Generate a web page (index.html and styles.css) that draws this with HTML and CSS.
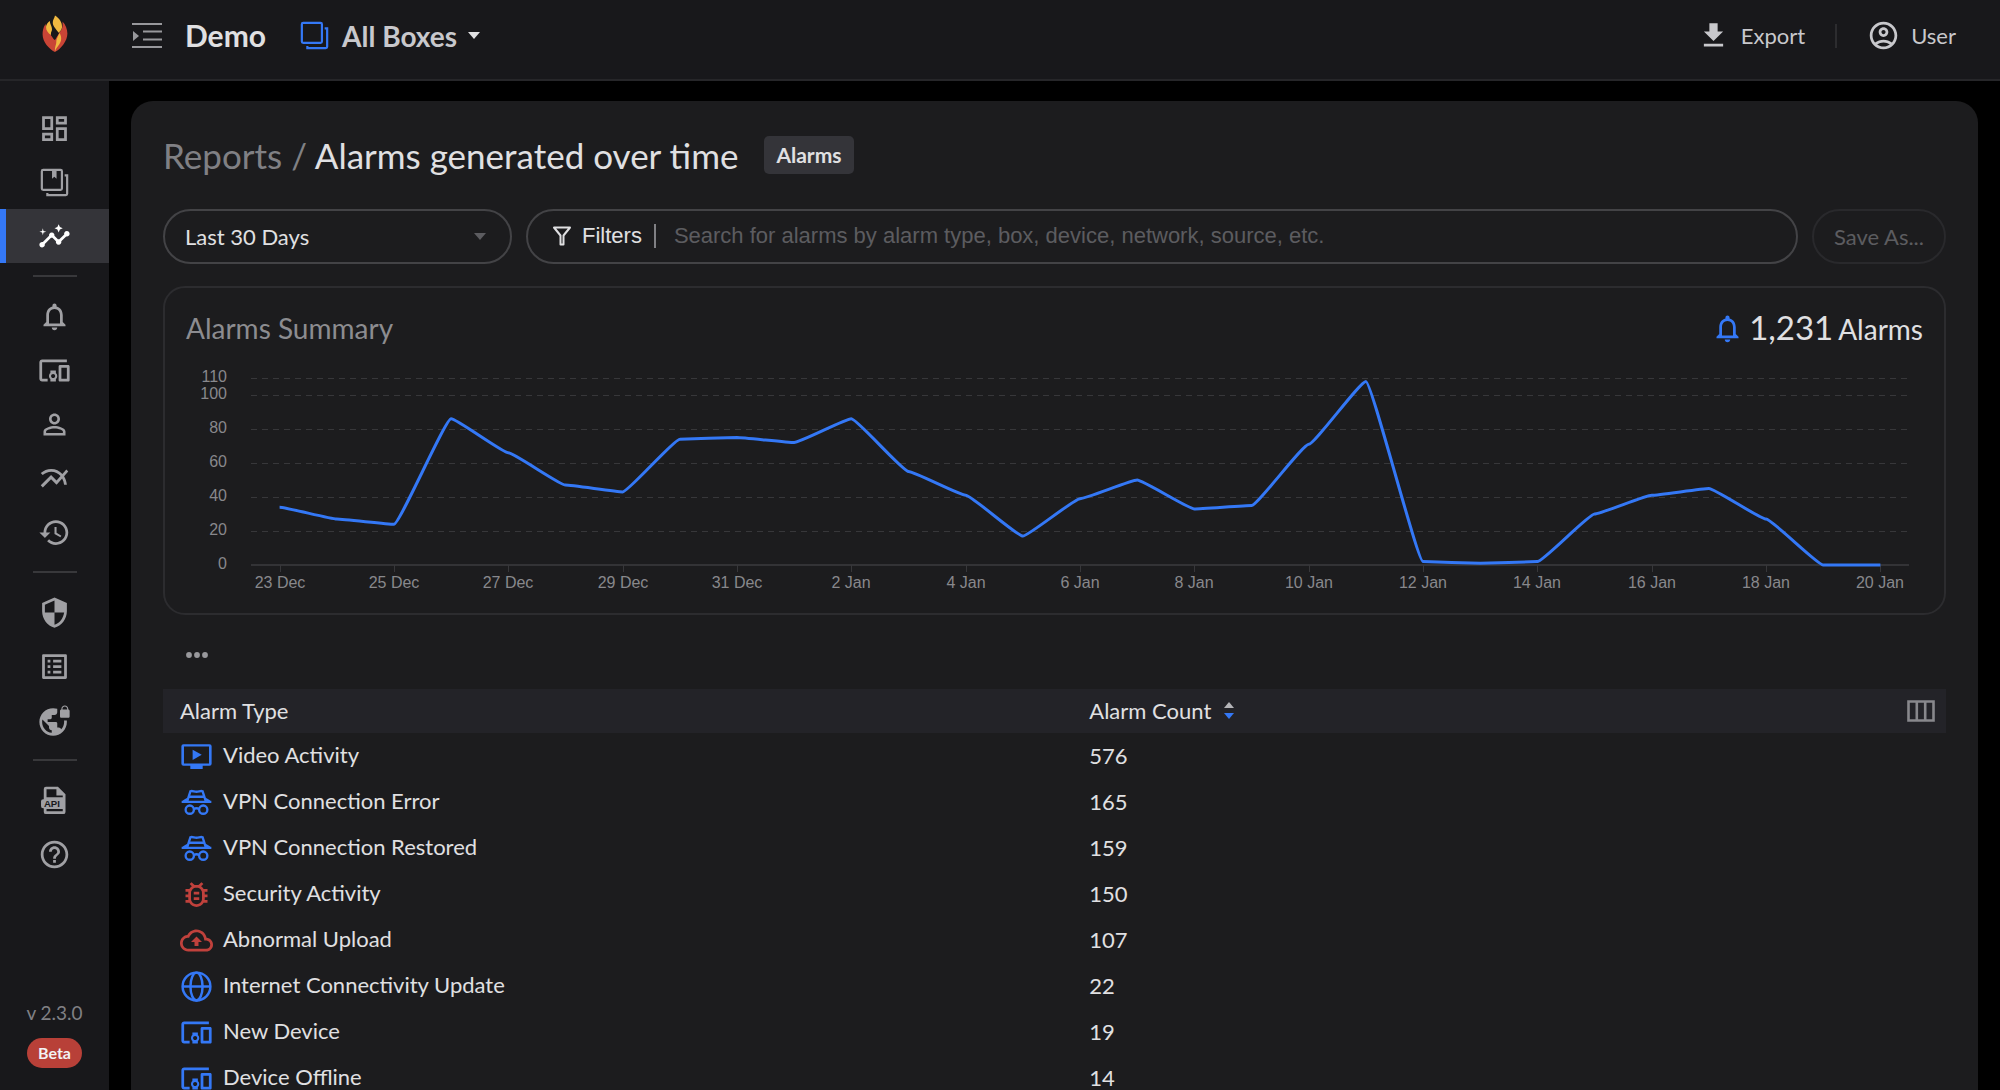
FILE: index.html
```html
<!DOCTYPE html>
<html lang="en">
<head>
<meta charset="utf-8">
<meta name="viewport" content="width=device-width, initial-scale=1">
<title>Alarms generated over time</title>
<link rel="stylesheet" href="styles.css">
</head>
<body>
<svg class="sprite" aria-hidden="true">
  <symbol id="i-boxes" viewBox="0 0 24 24"><g fill="none" stroke="currentColor" stroke-width="1.6"><rect x="2.8" y="2.8" width="14.6" height="14.6" rx="1"/><path d="M6.8 19.6V21.2H20.2a1 1 0 0 0 1-1V6.8H19.4"/></g></symbol>
  <symbol id="i-bell" viewBox="0 0 24 24"><path d="M12 22c1.100 0 2-.9 2-2h-4c0 1.100.89 2 2 2zm6-6v-5c0-3.070-1.640-5.640-4.500-6.320V4c0-.83-.67-1.500-1.500-1.500s-1.500.67-1.500 1.500v.68C7.630 5.360 6 7.920 6 11v5l-2 2v1h16v-1l-2-2zm-2 1H8v-6c0-2.480 1.510-4.500 4-4.500s4 2.020 4 4.500v6z"/></symbol>
  <symbol id="i-devices" viewBox="0 0 24 24"><path d="M3 6h18V4H3c-1.100 0-2 .9-2 2v12c0 1.100.9 2 2 2h4v-2H3V6zm10 6H9v1.780c-.61.55-1 1.330-1 2.220s.39 1.670 1 2.220V20h4v-1.780c.61-.55 1-1.340 1-2.220s-.39-1.670-1-2.220V12zm-2 5.500c-.83 0-1.500-.67-1.500-1.500s.67-1.500 1.500-1.500 1.500.67 1.500 1.500-.67 1.500-1.500 1.500zM22 8h-6c-.5 0-1 .5-1 1v10c0 .5.5 1 1 1h6c.5 0 1-.5 1-1V9c0-.5-.5-1-1-1zm-1 10h-4v-8h4v8z"/></symbol>
  <symbol id="i-incognito" viewBox="0 0 24 24"><g fill="none" stroke="currentColor" stroke-width="1.700"><path d="M5.400 10.600 7.600 3.800C9 3.200 10.200 4.200 12 4.200S15 3.200 16.400 3.800L18.600 10.600M6.700 7.800H17.300M2.400 11.300 5.400 9.500M21.600 11.300 18.600 9.500M1.200 11.500H22.800"/><circle cx="7.100" cy="17.200" r="3"/><circle cx="16.900" cy="17.200" r="3"/><path d="M10.100 16.800Q12 15.500 13.900 16.800"/></g></symbol>
</svg>

<div class="app">
  <header class="topbar">
    <a class="logo" href="#" aria-label="Home">
      <svg width="26" height="38" viewBox="0 0 26 38" aria-hidden="true">
        <path fill="#c94436" d="M3.500 9C1 13 .6 16 .6 19.500 .6 27 7 34 12.800 37 19 34 25.400 26 25.400 18.500 25.400 14 23.500 9.500 20.500 6.500 21 12 20 15 17 18L13 25 8 18C6 15 4 13 3.500 9z"/>
        <path fill="#f0b840" d="M13 .5C17 3 20.500 7.500 20 12.500 19.700 15 17.500 16.500 17 18 13.500 13.500 10.500 11 10.800 7 11 4.500 12.500 3 13 .5z"/>
        <path fill="#f0b840" d="M8 6C7.600 9 10 11 10 14.500 9.900 17 8.500 17.500 9 20 6 18 4 15.500 4 12 4 9.500 6 7 8 6z"/>
        <path fill="#f0b840" d="M17.500 18C20 22 19.500 26 17.500 29 16 31.500 13.800 33 13 36.500 12.600 31.500 14.500 29.500 14.300 26.500 14.200 24.500 16 21 17.500 18z"/>
        <path fill="#18181b" d="M10.800 10.500C11.500 14 14 16 16.800 18.500L12.300 25 8.800 20C9.500 17 11 15 10.800 10.500z"/>
      </svg>
    </a>
    <button class="plain menu-toggle" type="button" aria-label="Expand menu">
      <svg width="30" height="28" viewBox="0 0 30 28" aria-hidden="true"><path d="M0 2h30M11 9.500h19M11 17.500h19M0 25h30" fill="none" stroke="currentColor" stroke-width="2"/><path d="M1 9v10l6-5z"/></svg>
    </button>
    <span class="org">Demo</span>
    <button class="plain box-picker" type="button">
      <svg class="icon blue" aria-hidden="true"><use href="#i-boxes"/></svg>
      <span>All Boxes</span>
      <svg class="caret" width="12" height="7" viewBox="0 0 12 7" aria-hidden="true"><path d="M0 0h12L6 7z"/></svg>
    </button>
    <div class="actions">
      <button class="plain action" type="button">
        <svg class="icon" viewBox="0 0 24 24" aria-hidden="true"><path d="M19 9h-4V3H9v6H5l7 7 7-7zM5 18v2h14v-2H5z"/></svg>
        Export
      </button>
      <span class="sep"></span>
      <button class="plain action" type="button">
        <svg class="icon" viewBox="0 0 24 24" aria-hidden="true"><path d="M12 2C6.480 2 2 6.480 2 12s4.480 10 10 10 10-4.480 10-10S17.520 2 12 2zM7.350 18.500C8.660 17.560 10.260 17 12 17s3.340.56 4.650 1.500C15.340 19.440 13.740 20 12 20s-3.340-.56-4.650-1.500zm10.790-1.380C16.450 15.800 14.320 15 12 15s-4.450.8-6.140 2.120C4.700 15.730 4 13.950 4 12c0-4.420 3.580-8 8-8s8 3.580 8 8c0 1.950-.7 3.730-1.860 5.120zM12 6c-1.930 0-3.500 1.570-3.500 3.500S10.070 13 12 13s3.500-1.570 3.500-3.500S13.930 6 12 6zm0 5c-.83 0-1.500-.67-1.500-1.500S11.170 8 12 8s1.500.67 1.500 1.500S12.830 11 12 11z"/></svg>
        User
      </button>
    </div>
  </header>

  <nav class="sidebar" aria-label="Main">
    <a class="nav-item" href="#" aria-label="Dashboard"><svg class="icon" viewBox="0 0 24 24"><path d="M19 5v2h-4V5h4M9 5v6H5V5h4m10 8v6h-4v-6h4M9 17v2H5v-2h4M21 3h-8v6h8V3zM11 3H3v10h8V3zm10 8h-8v10h8V11zm-10 4H3v6h8v-6z"/></svg></a>
    <a class="nav-item" href="#" aria-label="Boxes"><svg class="icon" viewBox="0 0 24 24"><use href="#i-boxes"/><path d="M10.200 3h3.300v6.300l-1.650-1.500-1.650 1.500z"/></svg></a>
    <a class="nav-item active" href="#" aria-label="Reports" aria-current="page"><svg class="icon" viewBox="0 0 24 24"><path d="M21 8c-1.450 0-2.260 1.440-1.930 2.510l-3.550 3.560c-.3-.09-.74-.09-1.040 0l-2.550-2.550C12.270 10.450 11.460 9 10 9c-1.450 0-2.270 1.440-1.930 2.520l-4.560 4.550C2.440 15.740 1 16.550 1 18c0 1.100.9 2 2 2 1.450 0 2.260-1.440 1.930-2.510l4.550-4.560c.3.09.74.09 1.040 0l2.550 2.550C12.730 16.550 13.540 18 15 18c1.450 0 2.270-1.440 1.930-2.520l3.560-3.550c1.070.33 2.510-.48 2.510-1.930 0-1.100-.9-2-2-2zM15 9l.94-2.070L18 6l-2.060-.93L15 3l-.92 2.070L12 6l2.080.93zM3.500 11L4 9l2-.5L4 8l-.5-2L3 8l-2 .5L3 9z"/></svg></a>
    <hr class="rule">
    <a class="nav-item" href="#" aria-label="Alarms"><svg class="icon"><use href="#i-bell"/></svg></a>
    <a class="nav-item" href="#" aria-label="Devices"><svg class="icon"><use href="#i-devices"/></svg></a>
    <a class="nav-item" href="#" aria-label="Users"><svg class="icon" viewBox="0 0 24 24"><path d="M12 5.900c1.160 0 2.100.94 2.100 2.100s-.94 2.100-2.100 2.100S9.900 9.160 9.900 8s.94-2.100 2.100-2.100m0 9c2.970 0 6.100 1.460 6.100 2.100v1.100H5.900V17c0-.64 3.130-2.100 6.100-2.100M12 4C9.790 4 8 5.790 8 8s1.790 4 4 4 4-1.790 4-4-1.790-4-4-4zm0 9c-2.670 0-8 1.340-8 4v3h16v-3c0-2.660-5.330-4-8-4z"/></svg></a>
    <a class="nav-item" href="#" aria-label="Trends"><svg class="icon" viewBox="0 0 24 24"><path d="M22 6.920l-1.410-1.410-2.850 3.210C15.680 6.400 12.830 5 9.610 5 6.720 5 4.070 6.160 2 8l1.420 1.420C5.120 7.930 7.270 7 9.610 7c2.740 0 5.090 1.260 6.770 3.240l-2.880 3.240-4-4L2 16.990l1.500 1.500 6-6.010 4 4 4.050-4.550c.75 1.350 1.250 2.900 1.440 4.550H21c-.22-2.300-.95-4.390-2.040-6.140L22 6.920z"/></svg></a>
    <a class="nav-item" href="#" aria-label="History"><svg class="icon" viewBox="0 0 24 24"><path d="M13 3c-4.970 0-9 4.030-9 9H1l3.890 3.890.07.14L9 12H6c0-3.870 3.130-7 7-7s7 3.130 7 7-3.130 7-7 7c-1.930 0-3.680-.79-4.940-2.060l-1.420 1.420C8.270 19.990 10.510 21 13 21c4.970 0 9-4.030 9-9s-4.030-9-9-9zm-1 5v5l4.280 2.540.72-1.210-3.500-2.080V8H12z"/></svg></a>
    <hr class="rule">
    <a class="nav-item" href="#" aria-label="Rules"><svg class="icon" viewBox="0 0 24 24"><path d="M12 1L3 5v6c0 5.550 3.840 10.740 9 12 5.160-1.260 9-6.450 9-12V5l-9-4zm0 10.990h7c-.53 4.120-3.280 7.790-7 8.940V12H5V6.300l7-3.110v8.800z"/></svg></a>
    <a class="nav-item" href="#" aria-label="Lists"><svg class="icon" viewBox="0 0 24 24"><path d="M19 5v14H5V5h14m1.100-2H3.900c-.5 0-.9.4-.9.9v16.200c0 .4.4.9.9.9h16.200c.4 0 .9-.5.9-.9V3.900c0-.5-.5-.9-.9-.9zM11 7h6v2h-6V7zm0 4h6v2h-6v-2zm0 4h6v2h-6zM7 7h2v2H7zm0 4h2v2H7zm0 4h2v2H7z"/></svg></a>
    <a class="nav-item" href="#" aria-label="VPN"><svg class="icon" viewBox="0 0 24 24"><path d="M22 4v-.5C22 2.120 20.880 1 19.500 1S17 2.120 17 3.500V4c-.55 0-1 .45-1 1v4c0 .55.45 1 1 1h5c.55 0 1-.45 1-1V5c0-.55-.45-1-1-1zm-.8 0h-3.400v-.5c0-.94.76-1.700 1.700-1.700s1.700.76 1.700 1.700V4zm-2.280 8c.04.33.08.66.08 1 0 2.080-.8 3.970-2.100 5.390-.26-.81-1-1.390-1.900-1.390h-1v-3c0-.55-.45-1-1-1H7v-2h2c.55 0 1-.45 1-1V8h2c1.100 0 2-.9 2-2V3.460c-.95-.3-1.950-.46-3-.46C5.480 3 1 7.480 1 13s4.480 10 10 10 10-4.480 10-10c0-.34-.02-.67-.05-1h-2.030zM10 20.930c-3.950-.49-7-3.850-7-7.930 0-.62.08-1.210.21-1.790L8 16v1c0 1.100.9 2 2 2v1.930z"/></svg></a>
    <hr class="rule">
    <a class="nav-item" href="#" aria-label="API"><svg class="icon" viewBox="0 0 24 24"><path fill-rule="evenodd" d="M5.800 2H14.500L20 7.500V20.300a1.600 1.600 0 0 1-1.600 1.600H5.800a1.600 1.600 0 0 1-1.600-1.600V17.700H3.800A1.600 1.600 0 0 1 2.200 16V12.600A1.600 1.600 0 0 1 3.800 11H4.200V3.600A1.600 1.600 0 0 1 5.800 2zM6.200 3.800V9.600H18V8.300H13.400V3.800zM6.200 18.200V19.900H18V18.200z"/><text class="api-text" x="4.300" y="16.800">API</text></svg></a>
    <a class="nav-item" href="#" aria-label="Help"><svg class="icon" viewBox="0 0 24 24"><path d="M11 18h2v-2h-2v2zm1-16C6.480 2 2 6.480 2 12s4.480 10 10 10 10-4.480 10-10S17.520 2 12 2zm0 18c-4.410 0-8-3.590-8-8s3.590-8 8-8 8 3.590 8 8-3.590 8-8 8zm0-14c-2.210 0-4 1.790-4 4h2c0-1.100.9-2 2-2s2 .9 2 2c0 2-3 1.750-3 5h2c0-2.250 3-2.500 3-5 0-2.210-1.790-4-4-4z"/></svg></a>
    <div class="release">
      <span class="version">v 2.3.0</span>
      <span class="beta">Beta</span>
    </div>
  </nav>

  <main class="content">
    <section class="panel">
      <div class="heading">
        <h1><a href="#">Reports /</a> Alarms generated over time</h1>
        <span class="tag">Alarms</span>
      </div>

      <form class="controls">
        <div class="range">
          <select aria-label="Time range"><option>Last 30 Days</option></select>
          <svg width="12" height="7" viewBox="0 0 12 7" aria-hidden="true"><path d="M0 0h12L6 7z"/></svg>
        </div>
        <div class="search">
          <button class="plain filters" type="button">
            <svg width="20" height="20" viewBox="0 0 20 20" aria-hidden="true"><path d="M2 1.500H18L11.500 9.500V18.500H8.500V9.500z" fill="none" stroke="currentColor" stroke-width="2" stroke-linejoin="round"/></svg>
            Filters
          </button>
          <input type="text" aria-label="Search alarms" placeholder="Search for alarms by alarm type, box, device, network, source, etc.">
        </div>
        <button class="save" type="button" disabled>Save As...</button>
      </form>

      <section class="summary">
        <div class="summary-head">
          <h2>Alarms Summary</h2>
          <p class="total"><svg class="icon blue" aria-hidden="true"><use href="#i-bell"/></svg><strong>1,231</strong> Alarms</p>
        </div>
        <svg class="chart" id="chart" role="img" aria-label="Alarms per day"></svg>
      </section>

      <button class="plain more" type="button" aria-label="More options">
        <svg width="24" height="6" viewBox="0 0 24 6" aria-hidden="true"><circle cx="4" cy="3" r="2.900"/><circle cx="12" cy="3" r="2.900"/><circle cx="20" cy="3" r="2.900"/></svg>
      </button>

      <table class="alarms">
        <thead>
          <tr>
            <th scope="col">Alarm Type</th>
            <th scope="col">
              <div class="count-head">
                <button class="plain sort" type="button">Alarm Count
                  <svg width="10" height="18" viewBox="0 0 10 18" aria-hidden="true"><path fill="#b4b4b8" d="M0 6h10L5 0z"/><path fill="#3478f6" d="M0 11h10l-5 6z"/></svg>
                </button>
                <button class="plain columns" type="button" aria-label="Choose columns">
                  <svg width="28" height="22" viewBox="0 0 28 22" aria-hidden="true"><path d="M1.500 1.500h25v19h-25zM9.800 1.500v19M18.200 1.500v19" fill="none" stroke="currentColor" stroke-width="2.600"/></svg>
                </button>
              </div>
            </th>
          </tr>
        </thead>
        <tbody>
          <tr><td><span class="type"><svg class="icon blue" viewBox="0 0 24 24"><path fill-rule="evenodd" d="M2.500 3h19A1.500 1.500 0 0 1 23 4.500v12.800a1.500 1.500 0 0 1-1.500 1.500H16.500V21h-9V18.800h-5A1.500 1.500 0 0 1 1 17.300V4.500A1.500 1.500 0 0 1 2.500 3zM2.900 4.800V17H21.100V4.800z"/><path d="M9.200 7v7.600l6.600-3.800z"/></svg><span>Video Activity</span></span></td><td>576</td></tr>
          <tr><td><span class="type"><svg class="icon blue"><use href="#i-incognito"/></svg><span>VPN Connection Error</span></span></td><td>165</td></tr>
          <tr><td><span class="type"><svg class="icon blue"><use href="#i-incognito"/></svg><span>VPN Connection Restored</span></span></td><td>159</td></tr>
          <tr><td><span class="type"><svg class="icon red" viewBox="0 0 24 24"><path d="M20 8h-2.810c-.45-.78-1.070-1.450-1.820-1.960L17 4.410 15.590 3l-2.170 2.170C12.960 5.060 12.490 5 12 5s-.96.06-1.410.17L8.410 3 7 4.410l1.620 1.630C7.880 6.550 7.260 7.220 6.810 8H4v2h2.090c-.05.33-.09.66-.09 1v1H4v2h2v1c0 .34.04.67.09 1H4v2h2.810c1.040 1.790 2.970 3 5.190 3s4.150-1.210 5.190-3H20v-2h-2.090c.05-.33.09-.66.09-1v-1h2v-2h-2v-1c0-.34-.04-.67-.09-1H20V8zm-4 4v3c0 .22-.03.47-.07.7l-.1.65-.37.65c-.72 1.240-2.040 2-3.460 2s-2.740-.77-3.460-2l-.37-.64-.1-.65C8.030 15.480 8 15.230 8 15v-4c0-.23.03-.48.07-.7l.1-.65.37-.65c.3-.52.72-.97 1.210-1.310l.57-.39.74-.18c.31-.08.63-.12.94-.12.32 0 .63.04.95.12l.68.16.61.42c.5.34.91.78 1.210 1.310l.38.65.1.65c.04.22.07.47.07.69v1zm-6 2h4v2h-4zm0-4h4v2h-4z"/></svg><span>Security Activity</span></span></td><td>150</td></tr>
          <tr><td><span class="type"><svg class="icon red" viewBox="0 0 24 24"><path d="M19.350 10.040C18.670 6.590 15.640 4 12 4 9.110 4 6.600 5.640 5.350 8.040 2.340 8.360 0 10.910 0 14c0 3.310 2.690 6 6 6h13c2.760 0 5-2.240 5-5 0-2.640-2.050-4.780-4.650-4.960zM19 18H6c-2.210 0-4-1.790-4-4 0-2.050 1.530-3.760 3.560-3.970l1.070-.11.5-.95C8.080 7.140 9.940 6 12 6c2.620 0 4.880 1.860 5.390 4.430l.3 1.500 1.530.11c1.560.1 2.780 1.410 2.780 2.960 0 1.650-1.350 3-3 3zM8 13h2.550v3h2.900v-3H16l-4-4z"/></svg><span>Abnormal Upload</span></span></td><td>107</td></tr>
          <tr><td><span class="type"><svg class="icon blue" viewBox="0 0 24 24"><g fill="none" stroke="currentColor" stroke-width="1.800"><circle cx="12" cy="12" r="10.100"/><ellipse cx="12" cy="12" rx="4.400" ry="10.100"/><path d="M1.800 12h20.400"/></g></svg><span>Internet Connectivity Update</span></span></td><td>22</td></tr>
          <tr><td><span class="type"><svg class="icon blue"><use href="#i-devices"/></svg><span>New Device</span></span></td><td>19</td></tr>
          <tr><td><span class="type"><svg class="icon blue"><use href="#i-devices"/></svg><span>Device Offline</span></span></td><td>14</td></tr>
        </tbody>
      </table>
    </section>
  </main>
</div>
<script src="chart.js"></script>
</body>
</html>
```
FILE: styles.css
```css
* { box-sizing: border-box; }

body {
  margin: 0;
  background: #000;
  color: #e0e0e2;
  font-family: Lato, "Open Sans", sans-serif;
  font-size: 22px;
  line-height: 28px;
}

h1, h2, p { margin: 0; font-weight: 400; }
a { color: inherit; text-decoration: none; }
svg { display: block; fill: currentColor; }

.sprite { position: absolute; width: 0; height: 0; }
.icon { width: 33px; height: 33px; flex: none; }
.blue { color: #3478f6; }
.red { color: #c0413c; }

.plain {
  display: flex;
  align-items: center;
  padding: 0;
  border: 0;
  background: none;
  color: inherit;
  font: inherit;
  cursor: pointer;
}

.app {
  display: grid;
  grid-template: auto minmax(0, 1fr) / 109px minmax(0, 1fr);
  height: 100vh;
}

/* top bar */
.topbar {
  grid-column: 1 / -1;
  display: flex;
  align-items: center;
  padding: 0 44px 8px 0;
  height: 81px;
  background: #18181b;
  border-bottom: 2px solid #262629;
}
.logo { display: flex; justify-content: center; width: 109px; padding-bottom: 4px; }
.menu-toggle { margin-left: 23px; color: #98989c; }
.org { margin-left: 23px; padding-bottom: 2px; font-size: 30px; font-weight: 700; }
.box-picker { margin-left: 32px; gap: 11px; font-size: 28px; font-weight: 700; color: #c8c8cc; }
.caret { color: #e0e0e2; }
.actions { display: flex; align-items: center; margin-left: auto; color: #c8c8cc; }
.action { gap: 11px; }
.sep { width: 2px; height: 24px; margin: 0 30px; background: #2c2c2f; }

/* side navigation */
.sidebar {
  display: flex;
  flex-direction: column;
  padding-top: 20px;
  background: #18181b;
  color: #a0a0a4;
  overflow: hidden;
}
.nav-item { display: flex; align-items: center; justify-content: center; height: 54px; flex: none; }
.nav-item.active {
  background: #343439;
  color: #fff;
  box-shadow: inset 6px 0 #3478f6;
}
.rule { width: 44px; height: 2px; margin: 12px auto; border: 0; background: #38383b; flex: none; }
.api-text { font: 700 7px "Liberation Sans", Arial, sans-serif; fill: #18181b; }
.release {
  display: flex;
  flex-direction: column;
  align-items: center;
  gap: 8px;
  margin-top: auto;
  padding-bottom: 22px;
}
.version { font-size: 19px; line-height: 34px; color: #808084; }
.beta {
  padding: 0 11px;
  border-radius: 15px;
  background: #b84038;
  color: #f2f2f4;
  font-size: 16px;
  font-weight: 700;
  line-height: 30px;
}

/* report panel */
.content { padding: 20px 22px 0; overflow-y: auto; scrollbar-width: none; }
.panel {
  min-height: 100%;
  padding: 32px 32px 20px;
  border-radius: 22px 22px 0 0;
  background: #1c1c1e;
}
.heading { display: flex; align-items: center; gap: 26px; }
.heading h1 { font-size: 35px; line-height: 44px; }
.heading h1 a { color: #808084; }
.tag {
  padding: 0 12px;
  border-radius: 5px;
  background: #343439;
  font-size: 21px;
  font-weight: 700;
  line-height: 38px;
}

.controls { display: flex; gap: 14px; margin-top: 32px; }
.range, .search, .save { height: 55px; border: 2px solid #434346; border-radius: 28px; }
.range { position: relative; width: 349px; flex: none; }
.range select {
  width: 100%;
  height: 100%;
  padding: 0 20px;
  border: 0;
  border-radius: 28px;
  appearance: none;
  background: none;
  color: inherit;
  font: inherit;
}
.range svg { position: absolute; right: 24px; top: 22px; color: #5c5c60; pointer-events: none; }
.search {
  display: flex;
  flex: 1;
  align-items: center;
  padding: 0 26px 2px 24px;
  font-family: "Liberation Sans", Arial, sans-serif;
}
.filters { gap: 10px; height: 24px; padding-right: 12px; border-right: 2px solid #808084; }
.search input {
  flex: 1;
  min-width: 0;
  padding: 0 0 0 18px;
  border: 0;
  background: none;
  color: inherit;
  font: inherit;
  outline: 0;
}
.search input::placeholder { color: #5c5c60; opacity: 1; }
.save { padding: 0 20px; border-color: #29292c; background: none; color: #5c5c60; font: inherit; }

.summary { margin-top: 22px; border: 2px solid #2c2c2f; border-radius: 22px; }
.summary-head {
  display: flex;
  justify-content: space-between;
  align-items: center;
  padding: 17px 21px 0;
  font-size: 28px;
  line-height: 44px;
}
.summary h2 { font-size: 28px; color: #8c8c90; }
.total { display: flex; align-items: baseline; gap: 5px; }
.total .icon { align-self: center; }
.total strong { font-size: 33px; font-weight: 400; }

.chart { width: 100%; height: 262px; }
.chart .grid { stroke: #37373a; stroke-dasharray: 6 5; }
.chart .tick { stroke: #37373a; }
.chart .axis { stroke: #333336; stroke-width: 2; }
.chart .series { fill: none; stroke: #3478f6; stroke-width: 3; stroke-linejoin: bevel; }
.chart text { font: 16px "Liberation Sans", Arial, sans-serif; fill: #88888c; }

.more { height: 32px; margin: 24px 0 18px 22px; color: #98989c; }

/* alarm table */
.alarms { width: 100%; border-collapse: collapse; table-layout: fixed; text-align: left; }
.alarms th { height: 44px; padding: 0 17px; background: #232328; font-weight: 400; }
.alarms th:first-child { width: 51%; }
.alarms td { height: 46px; padding: 0 17px; vertical-align: middle; }
.count-head { display: flex; justify-content: space-between; align-items: center; margin-right: -6px; }
.sort { gap: 13px; }
.columns { color: #88888c; }
.type { display: flex; gap: 10px; }
.type span { line-height: 30px; }
```
FILE: chart.js
```js
(function () {
  var start = new Date(Date.UTC(2022, 11, 23));
  var values = [34, 27, 24, 86, 66, 47, 43, 74, 75, 72, 86, 55, 41, 17, 39, 50,
    33, 35, 71, 108, 2, 1, 2, 30, 41, 45, 27, 0, 0];
  var ticks = [0, 20, 40, 60, 80, 100, 110];
  var months = ['Jan', 'Feb', 'Mar', 'Apr', 'May', 'Jun', 'Jul', 'Aug', 'Sep', 'Oct', 'Nov', 'Dec'];
  var margin = { left: 86, right: 35 };
  var top = 27, bottom = 214, max = 110, smooth = 0.1;
  var svg = document.getElementById('chart');

  function add(name, attrs, text) {
    var el = document.createElementNS('http://www.w3.org/2000/svg', name);
    Object.keys(attrs).forEach(function (key) { el.setAttribute(key, attrs[key]); });
    if (text !== undefined) el.textContent = text;
    svg.appendChild(el);
  }

  function draw() {
    var right = svg.clientWidth - margin.right;
    var band = (right - margin.left) / values.length;
    function x(i) { return margin.left + band * (i + 0.5); }
    function y(v) { return bottom - (bottom - top) * v / max; }

    svg.textContent = '';
    ticks.forEach(function (t) {
      var py = Math.round(y(t));
      if (t > 0) add('line', { 'class': 'grid', x1: margin.left, x2: right, y1: py + 0.5, y2: py + 0.5 });
      else add('line', { 'class': 'axis', x1: margin.left, x2: right, y1: py, y2: py });
      add('text', { x: margin.left - 24, y: py + 4, 'text-anchor': 'end' }, t);
    });

    var d = 'M' + x(0) + ' ' + y(values[0]);
    values.forEach(function (v, i) {
      if (i > 0) {
        d += 'C' + (x(i - 1) + band * smooth) + ' ' + y(values[i - 1]) + ' ' +
          (x(i) - band * smooth) + ' ' + y(v) + ' ' + x(i) + ' ' + y(v);
      }
      if (i % 2 === 0) {
        var day = new Date(start.getTime() + i * 86400000);
        var px = Math.round(x(i));
        add('line', { 'class': 'tick', x1: px + 0.5, x2: px + 0.5, y1: bottom, y2: bottom + 7 });
        add('text', { x: px, y: bottom + 23, 'text-anchor': 'middle' },
          day.getUTCDate() + ' ' + months[day.getUTCMonth()]);
      }
    });
    add('path', { 'class': 'series', d: d });
  }

  draw();
  window.addEventListener('resize', draw);
})();
```
